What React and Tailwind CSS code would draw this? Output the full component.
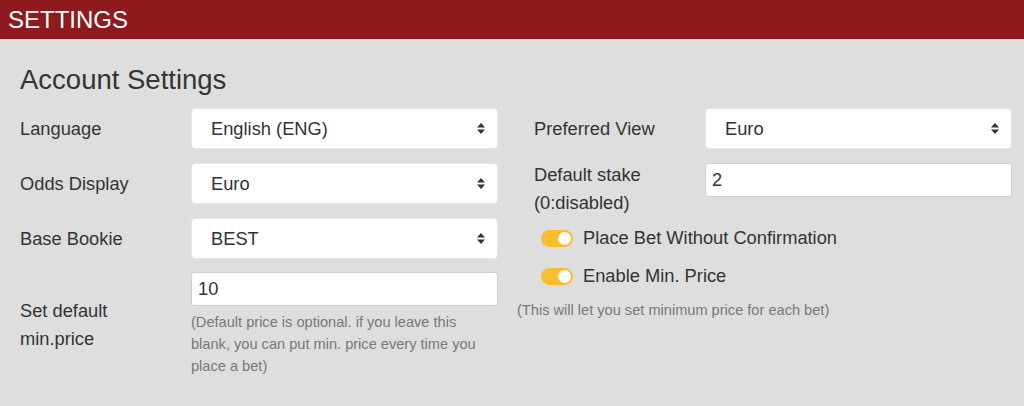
import { useState } from "react";

const SelectBox = ({ value }) => (
  <div className="w-[307px] h-[41px] bg-white border border-[#e6e6e6] rounded-[4px] flex items-center justify-between pl-[19px] pr-[12px] text-[18.3px] text-[#333]">
    <span>{value}</span>
    <svg width="8" height="11" viewBox="0 0 8 11">
      <path d="M0 4.5 L4 0 L8 4.5 Z M0 6.5 L4 11 L8 6.5 Z" fill="#333" />
    </svg>
  </div>
);

const TextBox = ({ value }) => (
  <div className="w-[307px] h-[34px] bg-white border border-[#cfcfcf] rounded-[3px] flex items-center pl-[6px] text-[18.3px] text-[#333]">
    {value}
  </div>
);

const Toggle = ({ on, onClick }) => (
  <button
    onClick={onClick}
    className={
      "w-[32px] h-[17px] rounded-full flex items-center px-[2px] " +
      (on ? "bg-[#fbbd2e] justify-end" : "bg-[#bbb] justify-start")
    }
  >
    <span className="w-[13px] h-[13px] rounded-full bg-white block" />
  </button>
);

const App = () => {
  const [noConfirm, setNoConfirm] = useState(true);
  const [minPrice, setMinPrice] = useState(true);

  return (
    <div
      className="w-[1024px] h-[406px] bg-[#dedede] text-[#333] overflow-hidden"
      style={{ fontFamily: '"Liberation Sans", Arial, sans-serif' }}
    >
      <div className="h-[39px] bg-[#8e1a20] text-white text-[24px] leading-[39px] pl-[8px]">
        SETTINGS
      </div>

      <div className="pl-[20px] pr-[12px] pt-[25px]">
        <h2 className="text-[27.5px] leading-[32px] font-normal">Account Settings</h2>

        <div className="flex gap-[36px] mt-[12px]">
          {/* left column */}
          <div className="w-[478px]">
            <div className="flex items-center">
              <div className="w-[171px] text-[18.3px]">Language</div>
              <SelectBox value="English (ENG)" />
            </div>
            <div className="flex items-center mt-[14px]">
              <div className="w-[171px] text-[18.3px]">Odds Display</div>
              <SelectBox value="Euro" />
            </div>
            <div className="flex items-center mt-[14px]">
              <div className="w-[171px] text-[18.3px]">Base Bookie</div>
              <SelectBox value="BEST" />
            </div>
            <div className="flex items-center mt-[13px]">
              <div className="w-[171px] text-[18.3px] leading-[28px]">
                Set default
                <br />
                min.price
              </div>
              <div className="w-[307px]">
                <TextBox value="10" />
                <p className="mt-[5px] text-[14.6px] leading-[22px] text-[#777]">
                  (Default price is optional. if you leave this blank, you can put min. price every time you place a bet)
                </p>
              </div>
            </div>
          </div>

          {/* right column */}
          <div className="w-[478px]">
            <div className="flex items-center">
              <div className="w-[171px] text-[18.3px]">Preferred View</div>
              <SelectBox value="Euro" />
            </div>
            <div className="flex items-start mt-[12px]">
              <div className="w-[171px] text-[18.3px] leading-[28px]">
                Default stake
                <br />
                (0:disabled)
              </div>
              <div className="mt-[2px]">
                <TextBox value="2" />
              </div>
            </div>
            <div className="flex items-center gap-[10px] h-[24px] mt-[9px] ml-[7px] text-[18.3px]">
              <Toggle on={noConfirm} onClick={() => setNoConfirm(!noConfirm)} />
              <span>Place Bet Without Confirmation</span>
            </div>
            <div className="flex items-center gap-[10px] h-[24px] mt-[14px] ml-[7px] text-[18.3px]">
              <Toggle on={minPrice} onClick={() => setMinPrice(!minPrice)} />
              <span>Enable Min. Price</span>
            </div>
            <p className="-ml-[17px] mt-[11px] text-[14.6px] leading-[22px] text-[#777]">
              (This will let you set minimum price for each bet)
            </p>
          </div>
        </div>
      </div>
    </div>
  );
};

export default App;
